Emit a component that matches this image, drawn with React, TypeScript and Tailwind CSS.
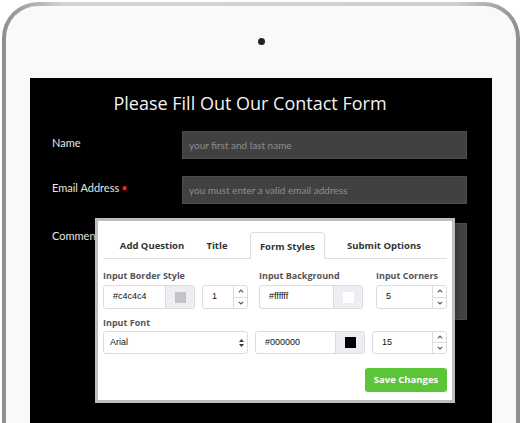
import React from "react";

// Tablet mock-up: a dark contact form with the "Form Styles" editor panel floating over it.

function Chevrons() {
  return (
    <div className="flex w-[14px] flex-col border-l border-[#dcdcdc] text-[#555]">
      <span className="flex flex-1 items-center justify-center border-b border-[#dcdcdc]">
        <svg width="6" height="4" viewBox="0 0 6 4" fill="none" stroke="currentColor" strokeWidth="1.1">
          <path d="M0.8 3.3 L3 1 L5.2 3.3" />
        </svg>
      </span>
      <span className="flex flex-1 items-center justify-center">
        <svg width="6" height="4" viewBox="0 0 6 4" fill="none" stroke="currentColor" strokeWidth="1.1">
          <path d="M0.8 0.8 L3 3 L5.2 0.8" />
        </svg>
      </span>
    </div>
  );
}

function ColorField({ value, swatch, className }: { value: string; swatch: string; className: string }) {
  return (
    <div className={`flex overflow-hidden rounded-[3px] border border-[#dcdcdc] bg-white ${className}`}>
      <span className="flex flex-1 items-center pl-[9px] text-[9px] text-[#111]">{value}</span>
      <span className="flex w-[29px] items-center justify-center border-l border-[#dcdcdc] bg-[#eeeef2]">
        <span className="h-[11px] w-[11px]" style={{ background: swatch }} />
      </span>
    </div>
  );
}

function NumberField({ value, className }: { value: string; className: string }) {
  return (
    <div className={`flex overflow-hidden rounded-[3px] border border-[#dcdcdc] bg-white ${className}`}>
      <span className="flex flex-1 items-center pl-[9px] text-[9px] text-[#111]">{value}</span>
      <Chevrons />
    </div>
  );
}

function DarkRow({ label, placeholder, required }: { label: string; placeholder: string; required?: boolean }) {
  return (
    <div className="flex h-[28px] items-center">
      <span className="w-[152px] pb-[3px] pl-[22px] text-[11px] text-[#e6e6e6]">
        {label}
        {required && <span className="ml-[2px] text-[#ff2020]">•</span>}
      </span>
      <div className="flex h-full w-[285px] items-center border border-[#4d4d4d] bg-[#414141] pl-[6px] text-[10px] text-[#8e8e8e]">
        {placeholder}
      </div>
    </div>
  );
}

export default function App() {
  return (
    <div className="relative h-[423px] w-[522px] overflow-hidden bg-white font-['Open_Sans',sans-serif]">
      {/* tablet bezel */}
      <div className="ml-[2px] mt-[2px] h-[440px] w-[518px] rounded-t-[36px] bg-[linear-gradient(90deg,#8d8d8d,#d4d4d4_12%,#cfcfcf_88%,#8d8d8d)] p-[4px]">
        <div className="flex h-full flex-col rounded-t-[32px] bg-[#f8f9fb]">
          <div className="flex h-[72px] items-center justify-center pb-[1px]">
            <span className="h-[7px] w-[7px] rounded-full bg-[#222]" />
          </div>
          <div className="mx-[24px] flex-1 bg-black">
            <h1 className="pr-[22px] pt-[13px] text-center text-[18px] leading-[24px] text-[#f2f2f2]">
              Please Fill Out Our Contact Form
            </h1>
            <div className="mt-[16px] flex flex-col gap-[17px] font-['Lato',sans-serif]">
              <DarkRow label="Name" placeholder="your first and last name" />
              <DarkRow label="Email Address" placeholder="you must enter a valid email address" required />
            </div>
            <div className="mt-[19px] flex font-['Lato',sans-serif]">
              <span className="w-[152px] pl-[22px] pt-[5px] text-[11px] text-[#e6e6e6]">Comments</span>
              <div className="h-[97px] w-[285px] border border-[#4d4d4d] bg-[#414141]" />
            </div>
          </div>
        </div>
      </div>

      {/* form styles panel */}
      <div className="absolute left-[95px] top-[218px] h-[185px] w-[360px] border-[3px] border-[#bdbdbd] bg-white px-[5px] pt-[11px] shadow-[0_2px_6px_rgba(0,0,0,0.35)]">
        <div className="flex h-[27px] items-end border-b border-[#dddddd] text-[9.5px] font-bold text-[#333]">
          <span className="flex h-full w-[98px] items-center justify-center pt-[3px]">Add Question</span>
          <span className="flex h-full w-[32px] items-center justify-center pt-[3px]">Title</span>
          <span className="w-[17px]" />
          <span className="-mb-px flex h-[27px] w-[75px] items-center justify-center rounded-t-[4px] border border-b-white border-[#dddddd] bg-white pt-[3px]">
            Form Styles
          </span>
          <span className="flex h-full w-[118px] items-center justify-center pt-[3px]">Submit Options</span>
        </div>

        <div className="grid grid-cols-[145px_108px_73px] gap-x-[9px] pt-[10px] font-['Liberation_Sans',sans-serif]">
          <span className="font-['Open_Sans',sans-serif] text-[9px] font-bold leading-[14px] text-[#555]">Input Border Style</span>
          <span className="pl-[2px] font-['Open_Sans',sans-serif] text-[9px] font-bold leading-[14px] text-[#555]">Input Background</span>
          <span className="pl-[2px] font-['Open_Sans',sans-serif] text-[9px] font-bold leading-[14px] text-[#555]">Input Corners</span>

          <div className="mt-[2px] flex h-[24px] gap-[7px]">
            <ColorField value="#c4c4c4" swatch="#c4c4c4" className="w-[92px]" />
            <NumberField value="1" className="w-[46px]" />
          </div>
          <ColorField value="#ffffff" swatch="#ffffff" className="ml-[2px] mt-[2px] h-[24px] w-[104px]" />
          <NumberField value="5" className="ml-[2px] mt-[2px] h-[24px] w-[71px]" />

          <span className="col-span-3 mt-[7px] font-['Open_Sans',sans-serif] text-[9px] font-bold leading-[14px] text-[#555]">
            Input Font
          </span>

          <div className="mt-[1px] flex h-[23px] items-center justify-between rounded-[3px] border border-[#dcdcdc] bg-white pl-[6px] pr-[3px] text-[9px] text-[#111]">
            <span>Arial</span>
            <svg width="5" height="8" viewBox="0 0 5 8" fill="#333">
              <path d="M2.5 0 L5 3 H0 Z M2.5 8 L5 5 H0 Z" />
            </svg>
          </div>
          <ColorField value="#000000" swatch="#000000" className="-ml-[2px] mt-[1px] h-[23px] w-[110px]" />
          <NumberField value="15" className="-ml-[2px] mt-[1px] h-[23px] w-[75px]" />
        </div>

        <div className="mt-[14px] flex justify-end">
          <button className="h-[24px] w-[82px] rounded-[3px] bg-[#5cc537] font-['Open_Sans',sans-serif] text-[9.5px] font-bold text-white">
            Save Changes
          </button>
        </div>
      </div>
    </div>
  );
}
